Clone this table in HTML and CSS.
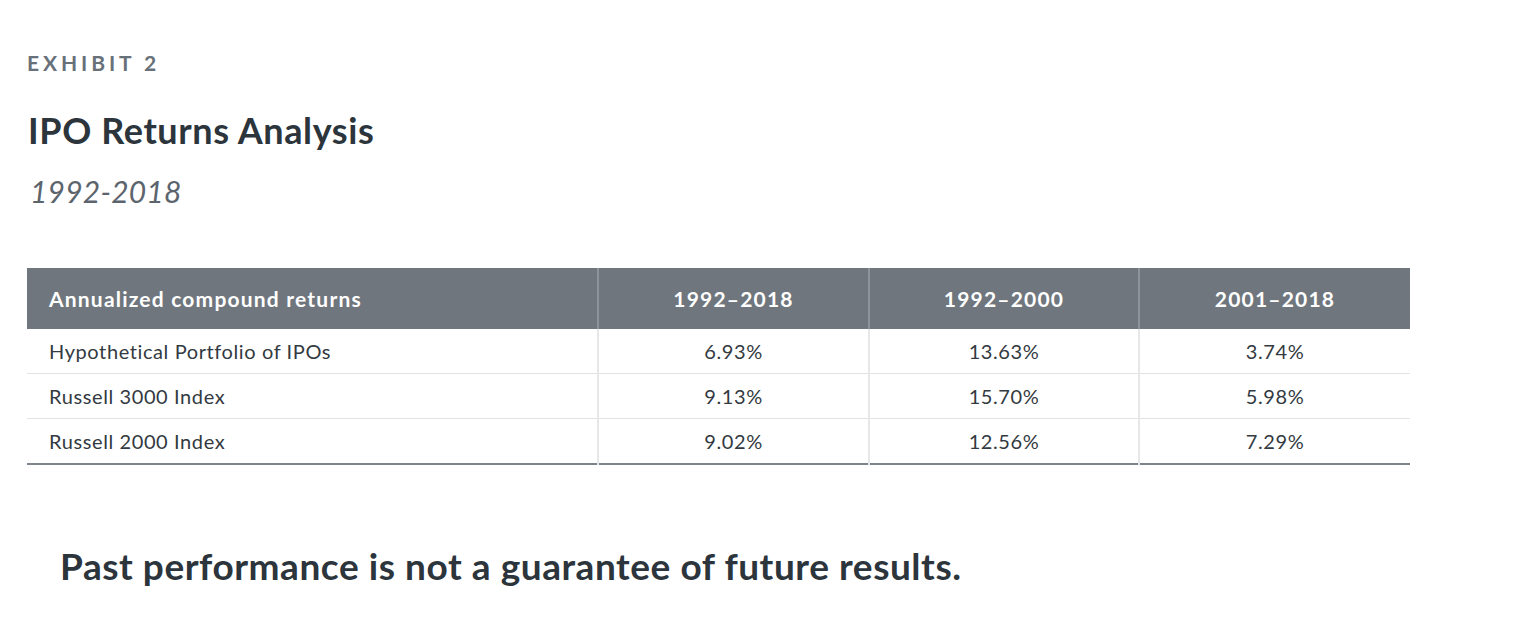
FILE: index.html
```html
<!DOCTYPE html>
<html lang="en">
<head>
<meta charset="utf-8">
<title>IPO Returns Analysis</title>
<link rel="stylesheet" href="styles.css">
</head>
<body>
<main class="exhibit">
  <div class="eyebrow">EXHIBIT 2</div>
  <h1 class="title">IPO Returns Analysis</h1>
  <div class="subtitle">1992-2018</div>
  <table class="returns">
    <colgroup>
      <col class="col-label">
      <col class="col-value">
      <col class="col-mid">
      <col class="col-value">
    </colgroup>
    <thead>
      <tr>
        <th class="label">Annualized compound returns</th>
        <th>1992–2018</th>
        <th>1992–2000</th>
        <th>2001–2018</th>
      </tr>
    </thead>
    <tbody>
      <tr>
        <td class="label">Hypothetical Portfolio of IPOs</td>
        <td>6.93%</td>
        <td>13.63%</td>
        <td>3.74%</td>
      </tr>
      <tr>
        <td class="label">Russell 3000 Index</td>
        <td>9.13%</td>
        <td>15.70%</td>
        <td>5.98%</td>
      </tr>
      <tr>
        <td class="label">Russell 2000 Index</td>
        <td>9.02%</td>
        <td>12.56%</td>
        <td>7.29%</td>
      </tr>
    </tbody>
  </table>
  <p class="disclaimer">Past performance is not a guarantee of future results.</p>
</main>
</body>
</html>
```

FILE: styles.css
```css
html, body {
  margin: 0;
  padding: 0;
  background: #ffffff;
}

body {
  font-family: Lato, "Noto Sans", "Liberation Sans", sans-serif;
  color: #2c343c;
}

.exhibit {
  padding: 48px 0 0 27px;
  width: 1383px;
}

.eyebrow {
  font-size: 21px;
  line-height: 30px;
  font-weight: 700;
  letter-spacing: 3.9px;
  color: #687079;
}

.title {
  margin: 31px 0 0 1px;
  font-size: 36px;
  line-height: 42px;
  font-weight: 700;
  letter-spacing: 0.6px;
  color: #2c343c;
}

.subtitle {
  margin: 20px 0 0 3px;
  font-size: 30px;
  line-height: 40px;
  font-style: italic;
  font-weight: 400;
  letter-spacing: 0.2px;
  color: #5c646d;
}

.returns {
  margin-top: 57px;
  width: 1383px;
  border-collapse: collapse;
  table-layout: fixed;
  border-bottom: 2px solid #7d838a;
}

.col-label {
  width: 571px;
}

.col-value {
  width: 271px;
}

.col-mid {
  width: 270px;
}

.returns th,
.returns td {
  text-align: center;
  padding: 0;
}

.returns th {
  height: 61px;
  background: #6f767d;
  color: #ffffff;
  font-size: 21px;
  font-weight: 700;
  letter-spacing: 1.2px;
  border-left: 2px solid #8d9399;
}

.returns th:first-child,
.returns td:first-child {
  border-left: none;
}

.returns td {
  height: 44px;
  font-size: 20px;
  letter-spacing: 0.6px;
  color: #333a41;
  border-left: 2px solid #e6e7e9;
  border-top: 1px solid #e2e3e5;
}

.returns tbody tr:first-child td {
  border-top: none;
}

.returns .label {
  text-align: left;
  padding-left: 22px;
}

.disclaimer {
  margin: 79px 0 0 33px;
  font-size: 37px;
  line-height: 44px;
  font-weight: 700;
  letter-spacing: 0.55px;
  color: #2c343c;
}
```
